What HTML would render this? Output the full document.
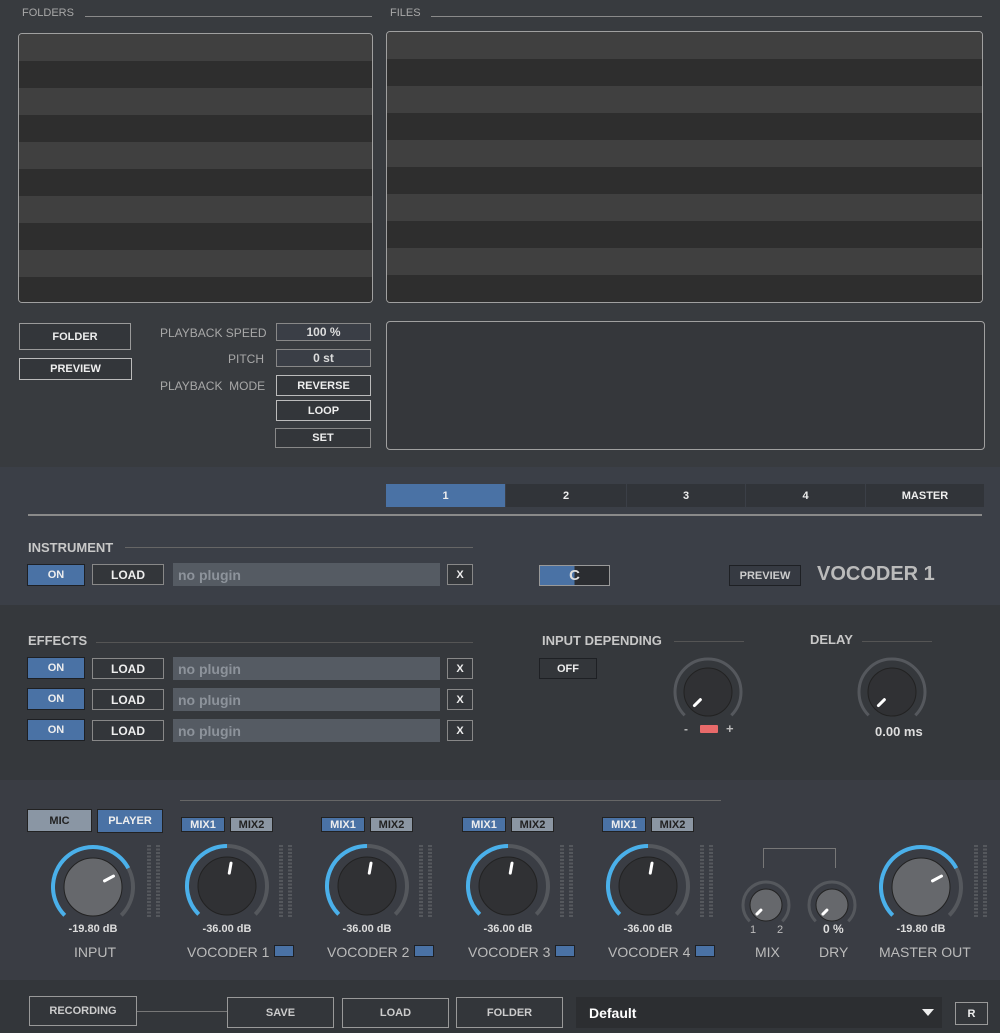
<!DOCTYPE html>
<html><head><meta charset="utf-8">
<style>
*{box-sizing:border-box;margin:0;padding:0}
body{width:1000px;height:1033px;background:#383b3f;font-family:"Liberation Sans",Arial,sans-serif;position:relative;overflow:hidden;color:#ddd}
.a{position:absolute}
.lbl{position:absolute;font-size:11px;color:#a8a8a8;white-space:nowrap}
.hl{position:absolute;height:1px;background:#8a8a8a}
.box{position:absolute;border:1.5px solid #a0a0a0;border-radius:4px;overflow:hidden}
.btn{position:absolute;border:1.5px solid #9a9a9a;color:#eee;font-weight:bold;font-size:11px;display:flex;align-items:center;justify-content:center;background:#33363a}
.on{position:absolute;background:#4a72a5;border:1.5px solid #1e2024;color:#eee;font-weight:bold;font-size:11px;display:flex;align-items:center;justify-content:center}
.plug{position:absolute;background:#555b63;color:#8d939b;font-weight:bold;font-size:14px;padding-left:5px;display:flex;align-items:center}
.sec{position:absolute;left:0;width:1000px}
.h2{position:absolute;font-size:13px;color:#c8c8c8;font-weight:bold;white-space:nowrap}
.tab{position:absolute;top:484px;height:23px;background:#313439;color:#eee;font-weight:bold;font-size:11px;display:flex;align-items:center;justify-content:center}
.mix{position:absolute;top:817px;height:15px;font-size:11px;font-weight:bold;display:flex;align-items:center;justify-content:center;border:1px solid #222}
.m1{background:#4a72a5;color:#eee}
.m2{background:#8b96a3;color:#222}
.db{position:absolute;font-size:11px;font-weight:bold;color:#ddd;text-align:center;width:100px}
.nm{position:absolute;font-size:14px;color:#bbb;text-align:center;white-space:nowrap}
.sq{position:absolute;width:20px;height:12px;background:#4a72a5;border:1.5px solid #1e2024}
</style></head><body>
<!-- top -->
<div class="lbl" style="left:22px;top:7px">FOLDERS</div>
<div class="hl" style="left:85px;top:16px;width:287px"></div>
<div class="lbl" style="left:390px;top:7px">FILES</div>
<div class="hl" style="left:431px;top:16px;width:551px"></div>
<div class="box" id="fb" style="left:18px;top:33px;width:355px;height:270px"></div>
<div class="box" id="fi" style="left:386px;top:31px;width:597px;height:272px"></div>
<div class="btn" style="left:19px;top:323px;width:112px;height:27px">FOLDER</div>
<div class="btn" style="left:19px;top:358px;width:113px;height:22px;border-color:#bbb">PREVIEW</div>
<div class="lbl" style="left:160px;top:326px;font-size:12px">PLAYBACK SPEED</div>
<div class="lbl" style="left:228px;top:352px;font-size:12px">PITCH</div>
<div class="lbl" style="left:160px;top:379px;font-size:12px">PLAYBACK&nbsp; MODE</div>
<div class="btn" style="left:276px;top:323px;width:95px;height:18px;background:#3a3e46;border-color:#888;font-size:12px;color:#ddd">100 %</div>
<div class="btn" style="left:276px;top:349px;width:95px;height:18px;background:#3a3e46;border-color:#888;font-size:12px;color:#ddd">0 st</div>
<div class="btn" style="left:276px;top:375px;width:95px;height:21px;border-color:#bbb">REVERSE</div>
<div class="btn" style="left:276px;top:400px;width:95px;height:21px;border-color:#bbb">LOOP</div>
<div class="btn" style="left:275px;top:428px;width:96px;height:20px;border-color:#888">SET</div>
<div class="box" style="left:386px;top:321px;width:599px;height:129px;background:#35373b"></div>

<!-- mid -->
<div class="sec" style="top:467px;height:138px;background:#3b3f47"></div>
<div class="tab" style="left:386px;width:119px;background:#4a72a5">1</div>
<div class="tab" style="left:506px;width:120px">2</div>
<div class="tab" style="left:627px;width:118px">3</div>
<div class="tab" style="left:746px;width:119px">4</div>
<div class="tab" style="left:866px;width:118px">MASTER</div>
<div class="hl" style="left:28px;top:514px;width:954px;height:2px;background:#8a8a8a"></div>
<div class="h2" style="left:28px;top:540px">INSTRUMENT</div>
<div class="hl" style="left:125px;top:547px;width:348px;background:#666"></div>
<div class="on" style="left:27px;top:564px;width:58px;height:22px">ON</div>
<div class="btn" style="left:92px;top:564px;width:72px;height:21px;font-size:12px;border-color:#888">LOAD</div>
<div class="plug" style="left:173px;top:563px;width:267px;height:23px">no plugin</div>
<div class="btn" style="left:447px;top:564px;width:26px;height:21px;border-color:#888">X</div>
<div class="a" style="left:539px;top:565px;width:71px;height:21px;border:1.5px solid #999;background:linear-gradient(90deg,#4a72a5 50%,#2b2d31 50%);color:#ddd;font-weight:bold;font-size:15px;display:flex;align-items:center;justify-content:center">C</div>
<div class="btn" style="left:729px;top:565px;width:72px;height:21px;border-color:#1e2024;background:#363a42;color:#ccc">PREVIEW</div>
<div class="a" style="left:817px;top:563px;font-size:20px;color:#bbb;font-weight:bold">VOCODER 1</div>

<!-- effects -->
<div class="sec" style="top:605px;height:175px;background:#35383c"></div>
<div class="h2" style="left:28px;top:633px">EFFECTS</div>
<div class="hl" style="left:96px;top:642px;width:377px;background:#555"></div>
<div id="fx"></div>
<div class="h2" style="left:542px;top:633px">INPUT DEPENDING</div>
<div class="hl" style="left:674px;top:641px;width:70px;background:#555"></div>
<div class="btn" style="left:539px;top:658px;width:58px;height:21px;border-color:#1e2024">OFF</div>
<div class="h2" style="left:810px;top:632px">DELAY</div>
<div class="hl" style="left:862px;top:641px;width:70px;background:#555"></div>
<div class="a" style="left:684px;top:722px;font-size:12px;color:#bbb;font-weight:bold">-</div>
<div class="a" style="left:700px;top:725px;width:18px;height:8px;background:#e86a6a;border-radius:1px"></div>
<div class="a" style="left:726px;top:721px;font-size:13px;color:#bbb;font-weight:bold">+</div>
<div class="a" style="left:875px;top:724px;font-size:13px;color:#ddd;font-weight:bold">0.00 ms</div>

<!-- mixer -->
<div class="sec" style="top:780px;height:200px;background:#3a3d44"></div>
<div class="hl" style="left:180px;top:800px;width:541px;background:#666"></div>
<div class="a" style="left:27px;top:809px;width:65px;height:23px;background:#8a96a4;border:1px solid #222;color:#222;font-size:11px;font-weight:bold;display:flex;align-items:center;justify-content:center">MIC</div>
<div class="a" style="left:97px;top:809px;width:66px;height:24px;background:#4a72a5;border:1px solid #222;color:#eee;font-size:11px;font-weight:bold;display:flex;align-items:center;justify-content:center">PLAYER</div>
<div id="mx"></div>
<div class="a" style="left:763px;top:848px;width:73px;height:20px;border:1px solid #777;border-bottom:none"></div>
<div class="a" style="left:750px;top:924px;font-size:11px;color:#bbb">1</div>
<div class="a" style="left:777px;top:924px;font-size:11px;color:#bbb">2</div>
<div class="a" style="left:823px;top:922px;font-size:12px;color:#ddd;font-weight:bold">0 %</div>
<svg class="a" style="left:0;top:0" width="1000" height="1033" id="sv"></svg>

<!-- footer -->
<div class="sec" style="top:980px;height:53px;background:#33363a"></div>
<div class="btn" style="left:29px;top:996px;width:108px;height:30px;border-color:#999;color:#ccc">RECORDING</div>
<div class="hl" style="left:137px;top:1011px;width:90px;background:#777"></div>
<div class="btn" style="left:227px;top:997px;width:107px;height:31px;border-color:#999;color:#ccc">SAVE</div>
<div class="btn" style="left:342px;top:998px;width:107px;height:30px;border-color:#999;color:#ccc">LOAD</div>
<div class="btn" style="left:456px;top:997px;width:107px;height:31px;border-color:#999;color:#ccc">FOLDER</div>
<div class="a" style="left:576px;top:997px;width:366px;height:31px;background:#2c2e31;color:#fff;font-weight:bold;font-size:14px;padding-left:13px;display:flex;align-items:center">Default</div>
<div class="a" style="left:922px;top:1009px;width:0;height:0;border-left:6px solid transparent;border-right:6px solid transparent;border-top:7px solid #eee"></div>
<div class="btn" style="left:955px;top:1002px;width:33px;height:23px;border-color:#999;font-size:11px">R</div>

<script>
function stripes(id,h){var e=document.getElementById(id),s='';for(var y=0;y<h;y+=27){s+='<div style="height:27px;background:'+((y/27)%2?'#2e2e2e':'#404040')+'"></div>';}e.innerHTML=s;}
stripes('fb',270);stripes('fi',272);
var fx='';[657,688,719].forEach(function(t){
fx+='<div class="on" style="left:27px;top:'+t+'px;width:58px;height:22px">ON</div>'+
'<div class="btn" style="left:92px;top:'+(t+1)+'px;width:72px;height:21px;font-size:12px;border-color:#888">LOAD</div>'+
'<div class="plug" style="left:173px;top:'+t+'px;width:267px;height:23px">no plugin</div>'+
'<div class="btn" style="left:447px;top:'+(t+1)+'px;width:26px;height:21px;border-color:#888">X</div>';});
document.getElementById('fx').innerHTML=fx;
var mx='';
[[227,'VOCODER 1'],[367,'VOCODER 2'],[508,'VOCODER 3'],[648,'VOCODER 4']].forEach(function(v){
var x=v[0]-46;
mx+='<div class="mix m1" style="left:'+x+'px;width:44px">MIX1</div><div class="mix m2" style="left:'+(x+49)+'px;width:43px">MIX2</div>';
mx+='<div class="db" style="left:'+(v[0]-50)+'px;top:923px">-36.00 dB</div>';
mx+='<div class="nm" style="left:'+(v[0]-40)+'px;top:944px">'+v[1]+'</div>';
mx+='<div class="sq" style="left:'+(v[0]+47)+'px;top:945px"></div>';
});
mx+='<div class="db" style="left:43px;top:923px">-19.80 dB</div><div class="nm" style="left:74px;top:944px">INPUT</div>';
mx+='<div class="db" style="left:871px;top:923px">-19.80 dB</div><div class="nm" style="left:879px;top:944px">MASTER OUT</div>';
mx+='<div class="nm" style="left:755px;top:944px">MIX</div><div class="nm" style="left:819px;top:944px">DRY</div>';
document.getElementById('mx').innerHTML=mx;
function P(cx,cy,r,a){a=a*Math.PI/180;return [cx+r*Math.sin(a),cy-r*Math.cos(a)];}
function arc(cx,cy,r,a1,a2,col,w){var p=P(cx,cy,r,a1),q=P(cx,cy,r,a2);var L=(a2-a1)>180?1:0;return '<path d="M'+p[0]+' '+p[1]+' A'+r+' '+r+' 0 '+L+' 1 '+q[0]+' '+q[1]+'" fill="none" stroke="'+col+'" stroke-width="'+w+'"/>';}
var s='';
function knob(cx,cy,R,r,val,fill,pa,w){
s+=arc(cx,cy,R,-135,135,'#55585d',w);
if(val>-135)s+=arc(cx,cy,R,-135,val,'#4ab0ea',w);
s+='<circle cx="'+cx+'" cy="'+cy+'" r="'+r+'" fill="'+fill+'" stroke="#222" stroke-width="1"/>';
var a=P(cx,cy,r*0.45,pa),b=P(cx,cy,r*0.8,pa);
s+='<line x1="'+a[0]+'" y1="'+a[1]+'" x2="'+b[0]+'" y2="'+b[1]+'" stroke="#fff" stroke-width="3" stroke-linecap="round"/>';}
knob(93,887,40,29,62,'#66686c',62,4);
knob(913+8,887,40,29,62,'#66686c',62,4);
[227,367,508,648].forEach(function(x){knob(x,886,40,29,0,'#303134',10,4);});
knob(766,905,23,16,-135,'#66686c',-135,3);
knob(832,905,23,16,-135,'#66686c',-135,3);
knob(708,692,33,24,-135,'#303134',-135,3);
knob(892,692,33,24,-135,'#303134',-135,3);
// meters
[149,281,421,562,702,976].forEach(function(x){
for(var k=0;k<2;k++){s+='<line x1="'+(x+k*9)+'" y1="845" x2="'+(x+k*9)+'" y2="918" stroke="#55585d" stroke-width="4" stroke-dasharray="2 1.5"/>';}});
document.getElementById('sv').innerHTML=s;
</script>
</body></html>
